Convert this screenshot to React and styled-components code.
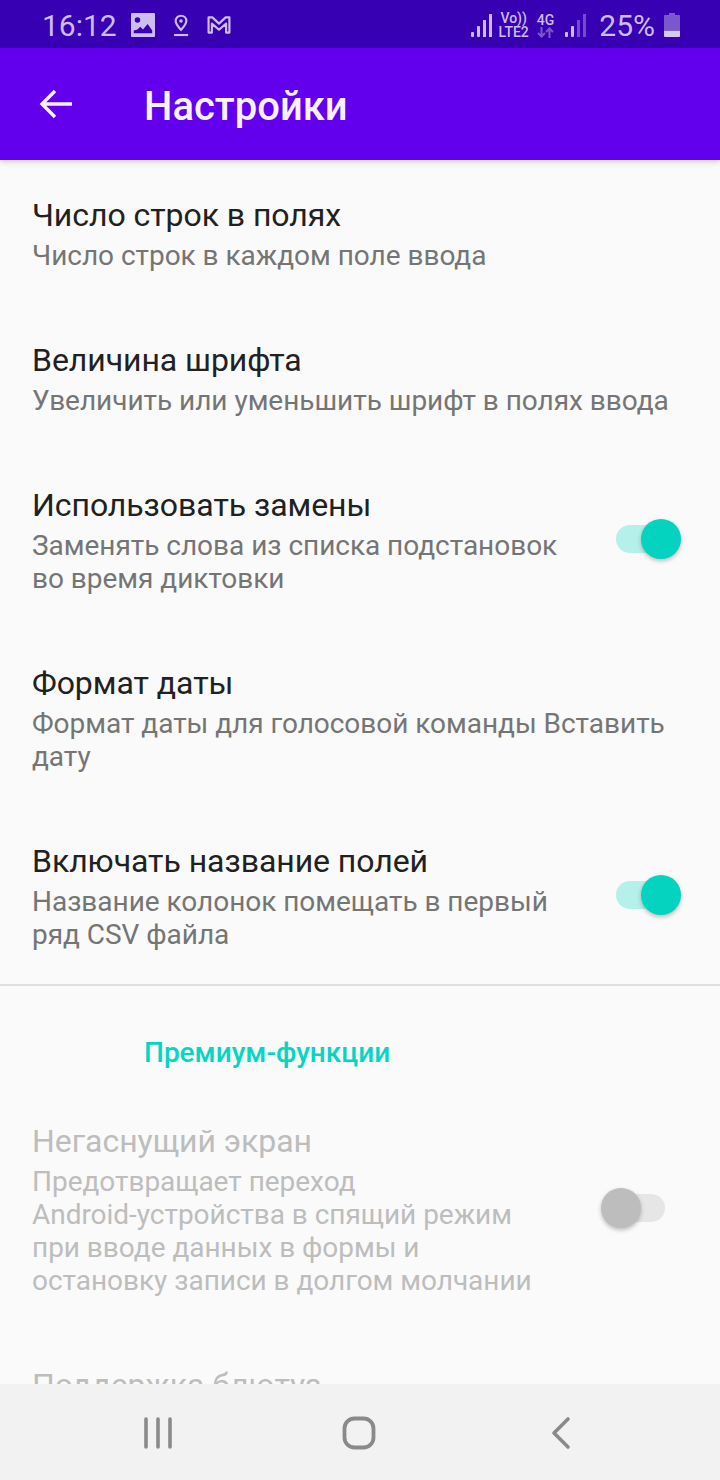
import React from "react";
import styled, { createGlobalStyle } from "styled-components";

const Global = createGlobalStyle`
  html, body { margin: 0; padding: 0; background: #fafafa; }
  * { box-sizing: border-box; }
`;

const Screen = styled.div`
  width: 720px;
  height: 1480px;
  display: flex;
  flex-direction: column;
  overflow: hidden;
  background: #fafafa;
  font-family: Roboto, "Noto Sans", sans-serif;
`;

const StatusBar = styled.div`
  height: 48px;
  flex: none;
  background: #3700b3;
  color: #cdbdf0;
  display: flex;
  align-items: center;
  justify-content: space-between;
  padding: 2px 40px 0 42px;
`;
const StatusLeft = styled.div`
  display: flex;
  align-items: center;
  gap: 18px;
`;
const StatusRight = styled.div`
  display: flex;
  align-items: center;
`;
const Time = styled.span`
  font-size: 30px;
  margin-right: -4px;
`;
const Percent = styled.span`
  font-size: 30px;
  margin: 0 9px 0 13px;
`;
const NetStack = styled.div`
  display: flex;
  flex-direction: column;
  align-items: center;
  font-weight: 500;
  font-size: 14px;
  line-height: 14px;
  margin: 0 ${(p) => p.$right}px 0 ${(p) => p.$left}px;
`;

const AppBar = styled.header`
  height: 112px;
  flex: none;
  background: #6200ee;
  color: #f6f0ff;
  display: flex;
  align-items: center;
  padding: 0 0 0 38px;
  gap: 70px;
  box-shadow: 0 2px 6px rgba(0, 0, 0, 0.18);
  position: relative;
  z-index: 1;
`;
const AppTitle = styled.h1`
  margin: 0;
  padding-top: 6px;
  font-size: 40px;
  font-weight: 500;
  line-height: 44px;
`;

const Content = styled.main`
  flex: 1;
  min-height: 0;
  overflow: hidden;
`;
const Row = styled.div`
  display: flex;
  align-items: center;
  gap: 40px;
  padding: 36px 39px 33px 32px;
`;
const RowText = styled.div`
  flex: 1;
  min-width: 0;
`;
const Title = styled.div`
  font-size: 32px;
  line-height: 38px;
  margin-bottom: 5px;
  letter-spacing: -0.05px;
  color: ${(p) => (p.$disabled ? "#bdbdbd" : "#212121")};
`;
const Sub = styled.div`
  font-size: 28px;
  line-height: 33px;
  letter-spacing: -0.03px;
  white-space: nowrap;
  color: ${(p) => (p.$disabled ? "#bdbdbd" : "#757575")};
`;
const Divider = styled.hr`
  margin: 0;
  border: 0;
  height: 2px;
  background: #dfdfdf;
`;
const SectionHeader = styled.h2`
  margin: 0;
  height: 100px;
  padding: 50px 0 0 144px;
  font-size: 28px;
  line-height: 34px;
  font-weight: 500;
  color: #03d6c1;
`;

const Switch = styled.div`
  position: relative;
  flex: none;
  width: 80px;
  height: 40px;
  margin-top: -3px;
`;
const Track = styled.div`
  position: absolute;
  top: 6px;
  height: 28px;
  border-radius: 14px;
  left: ${(p) => (p.$on ? "15px" : "14px")};
  width: 50px;
  background: ${(p) => (p.$on ? "#b6f0ea" : "#e6e6e6")};
`;
const Thumb = styled.div`
  position: absolute;
  top: 0;
  width: 40px;
  height: 40px;
  border-radius: 50%;
  left: ${(p) => (p.$on ? "40px" : "0")};
  background: ${(p) => (p.$on ? "#03d3bf" : "#bdbdbd")};
  box-shadow: 0 2px 4px rgba(0, 0, 0, 0.25);
`;

const NavBar = styled.nav`
  height: 96px;
  flex: none;
  background: #f2f2f2;
  position: relative;
  z-index: 1;
  display: grid;
  grid-template-columns: 316px 85px 319px;
  align-items: center;
  justify-items: center;
  padding-top: 2px;
`;
const NavIcon = styled.svg`
  display: block;
`;

const Toggle = ({ on }) => (
  <Switch>
    <Track $on={on} />
    <Thumb $on={on} />
  </Switch>
);

const Setting = ({ title, sub, on, toggle, disabled }) => (
  <Row>
    <RowText>
      <Title $disabled={disabled}>{title}</Title>
      {sub && sub.map((l, i) => <Sub key={i} $disabled={disabled}>{l}</Sub>)}
    </RowText>
    {toggle && <Toggle on={on} />}
  </Row>
);

const ImageIcon = () => (
  <svg width="24" height="24" viewBox="0 0 26 26">
    <path fill="currentColor" fillRule="evenodd" d="M1 0h24a1 1 0 0 1 1 1v24a1 1 0 0 1-1 1H1a1 1 0 0 1-1-1V1a1 1 0 0 1 1-1ZM7 4.500a3 3 0 1 0 0 6 3 3 0 0 0 0-6ZM3 19v3h20v-3l-5-7-5 6-3-3-3 3-4 1Z" />
  </svg>
);
const PinIcon = () => (
  <svg width="16" height="23" viewBox="0 0 18 25">
    <path fill="none" stroke="currentColor" strokeWidth="2.400" d="M9 1.500c-3.600 0-6 2.600-6 5.900 0 3.600 3.400 7 6 10 2.600-3 6-6.400 6-10 0-3.300-2.400-5.900-6-5.900Z" />
    <circle cx="9" cy="7.500" r="2" fill="currentColor" />
    <rect x="1" y="22" width="16" height="2.400" fill="currentColor" />
  </svg>
);
const MailIcon = () => (
  <svg width="24" height="18" viewBox="0 0 25 19">
    <path fill="none" stroke="currentColor" strokeWidth="2.300" strokeLinejoin="round" d="M1.500 1.500h4l7 6.500 7-6.500h4v16h-3.500V8l-7.500 6.500L5 8v9.500H1.500Z" />
  </svg>
);
const Signal = ({ dim }) => (
  <svg width="21" height="24" viewBox="0 0 21 24">
    <rect x="0" y="19" width="3" height="5" rx="1" fill="currentColor" />
    <rect x="6" y="13" width="3" height="11" rx="1" fill="currentColor" />
    <rect x="12" y="7" width="3" height="17" fill="currentColor" opacity={dim ? 0.4 : 1} />
    <rect x="18" y="1" width="3" height="23" fill="currentColor" opacity={dim ? 0.4 : 1} />
  </svg>
);
const Battery = () => (
  <svg width="16" height="24" viewBox="0 0 16 24">
    <path fill="#7a58cb" d="M5 0h6v2h4a1 1 0 0 1 1 1v14H0V3a1 1 0 0 1 1-1h4Z" />
    <path fill="#d6c9f2" d="M0 17.500h16V23a1 1 0 0 1-1 1H1a1 1 0 0 1-1-1Z" />
  </svg>
);
const ArrowsIcon = () => (
  <svg width="17" height="11" viewBox="0 0 17 11">
    <path fill="none" stroke="#7a58cb" strokeWidth="2" d="M4.500 0v9.500M1 6l3.500 3.500L8 6M12.500 11V1.500M9 5l3.500-3.500L16 5" />
  </svg>
);

export default function App() {
  return (
    <Screen>
      <Global />
      <StatusBar>
        <StatusLeft>
          <Time>16:12</Time>
          <ImageIcon />
          <PinIcon />
          <MailIcon />
        </StatusLeft>
        <StatusRight>
          <Signal />
          <NetStack $left={7} $right={8}>
            <span>Vo))</span>
            <span>LTE2</span>
          </NetStack>
          <NetStack $left={0} $right={11}>
            <span>4G</span>
            <ArrowsIcon />
          </NetStack>
          <Signal dim />
          <Percent>25%</Percent>
          <Battery />
        </StatusRight>
      </StatusBar>
      <AppBar>
        <svg width="36" height="32" viewBox="0 0 36 32">
          <path fill="none" stroke="currentColor" strokeWidth="3.400" d="M34 16H4M17 3 4 16l13 13" />
        </svg>
        <AppTitle>Настройки</AppTitle>
      </AppBar>
      <Content>
        <Setting title="Число строк в полях" sub={["Число строк в каждом поле ввода"]} />
        <Setting title="Величина шрифта" sub={["Увеличить или уменьшить шрифт в полях ввода"]} />
        <Setting title="Использовать замены" sub={["Заменять слова из списка подстановок", "во время диктовки"]} toggle on />
        <Setting title="Формат даты" sub={["Формат даты для голосовой команды Вставить", "дату"]} />
        <Setting title="Включать название полей" sub={["Название колонок помещать в первый", "ряд CSV файла"]} toggle on />
        <Divider />
        <SectionHeader>Премиум-функции</SectionHeader>
        <Setting
          disabled
          toggle
          title="Негаснущий экран"
          sub={["Предотвращает переход", "Android-устройства в спящий режим", "при вводе данных в формы и", "остановку записи в долгом молчании"]}
        />
        <Setting disabled title="Поддержка блютуз" />
      </Content>
      <NavBar>
        <NavIcon width="30" height="32" viewBox="0 0 30 32">
          <path stroke="#8a8a8a" strokeWidth="3.600" strokeLinecap="round" d="M3 2v28M15 2v28M27 2v28" />
        </NavIcon>
        <NavIcon width="34" height="34" viewBox="0 0 34 34">
          <rect x="2.500" y="2.500" width="29" height="29" rx="10" fill="none" stroke="#8a8a8a" strokeWidth="3.800" />
        </NavIcon>
        <NavIcon width="20" height="34" viewBox="0 0 20 34">
          <path fill="none" stroke="#8a8a8a" strokeWidth="3.600" strokeLinecap="round" strokeLinejoin="round" d="M17 3 3 17l14 14" />
        </NavIcon>
      </NavBar>
    </Screen>
  );
}
